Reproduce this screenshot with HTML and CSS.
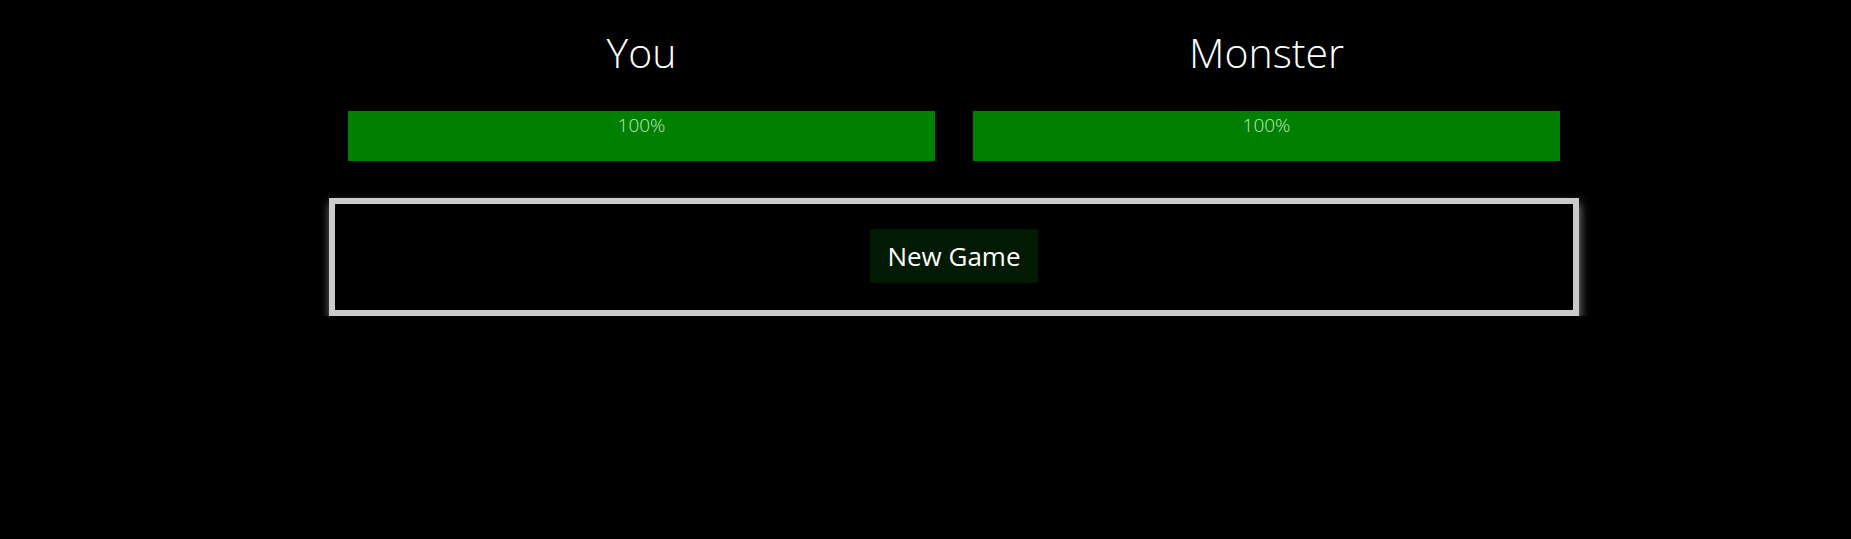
FILE: index.html
```html
<!DOCTYPE html>
<html lang="en">
<head>
<meta charset="utf-8">
<title>Monster Slayer</title>
<link rel="stylesheet" href="styles.css">
</head>
<body>
<div class="app">
  <div class="stats">
    <section class="combatant">
      <h2 class="combatant-name">You</h2>
      <div class="healthbar">
        <div class="healthbar-value" style="width: 100%">100%</div>
      </div>
    </section>
    <section class="combatant">
      <h2 class="combatant-name">Monster</h2>
      <div class="healthbar">
        <div class="healthbar-value" style="width: 100%">100%</div>
      </div>
    </section>
  </div>
  <div class="controls">
    <button class="new-game">New Game</button>
  </div>
</div>
</body>
</html>
```

FILE: styles.css
```css
* {
  box-sizing: border-box;
}

html, body {
  margin: 0;
  background: #000;
  color: #fff;
  font-family: "Open Sans", "Noto Sans", sans-serif;
}

.app {
  width: 1250px;
  margin: 0 0 0 329px;
}

.stats {
  display: flex;
}

.combatant {
  flex: 1 1 0;
  padding: 0 19px;
  text-align: center;
}

.combatant-name {
  margin: 28px 0 35px;
  font-size: 41px;
  font-weight: 300;
  line-height: 48px;
  color: #fff;
}

.healthbar {
  height: 50px;
  background: #000;
}

.healthbar-value {
  height: 100%;
  background: #008000;
  color: #bfe8b8;
  font-size: 19px;
  font-weight: 300;
  line-height: 27px;
  padding-top: 1px;
  text-align: center;
}

.controls {
  margin-top: 37px;
  border: 6px solid #cbcbcb;
  padding: 25px 0 27px;
  text-align: center;
  box-shadow: 1px 5px 9px rgba(255, 255, 255, 0.5);
}

.new-game {
  display: inline-flex;
  align-items: center;
  height: 54px;
  padding: 0 17px;
  border: none;
  border-radius: 3px;
  background: #011a01;
  color: #fff;
  font-family: "Open Sans", "Noto Sans", sans-serif;
  font-size: 26px;
  font-weight: 400;
}
```
